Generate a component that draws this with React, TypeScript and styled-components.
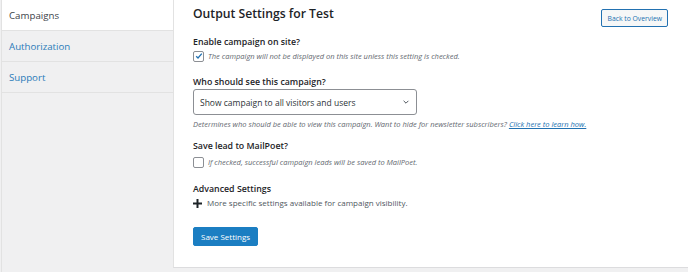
import React from "react";
import styled, { createGlobalStyle } from "styled-components";

const GlobalStyle = createGlobalStyle`
  body {
    margin: 0;
    font-family: "Open Sans", "Noto Sans", sans-serif;
    background: #f0f0f1;
  }
`;

const StyledPage = styled.div`
  display: flex;
  width: 688px;
  height: 272px;
  background: #f0f0f1;
  overflow: hidden;
`;

const StyledSidebar = styled.nav`
  width: 171px;
  margin-left: 1px;
  border-left: 1px solid #e2e2e2;
  display: flex;
  flex-direction: column;
`;

const StyledTab = styled.div<{ $active?: boolean }>`
  height: 30px;
  display: flex;
  align-items: center;
  padding-left: 7px;
  font-size: 9.7px;
  color: ${(p) => (p.$active ? "#3c434a" : "#2b7bb9")};
  background: ${(p) => (p.$active ? "#ffffff" : "#f0f0f1")};
  border-bottom: 1px solid #e2e2e2;
`;

const StyledMain = styled.main`
  flex: 1;
  height: 268px;
  background: #ffffff;
  border-left: 1px solid #e2e2e2;
  border-bottom: 1px solid #dcdcde;
  padding: 0 20px 0 19px;
  box-sizing: border-box;
`;

const StyledHeader = styled.div`
  display: flex;
  justify-content: space-between;
  align-items: flex-start;
  padding-top: 5px;
`;

const StyledTitle = styled.h1`
  margin: 0;
  font-size: 12.2px;
  line-height: 18px;
  font-weight: 600;
  color: #1d2327;
`;

const StyledSmallButton = styled.button`
  margin-top: 4px;
  height: 18px;
  padding: 0 5px;
  font-family: inherit;
  font-size: 6.8px;
  color: #2271b1;
  background: #f6f7f7;
  border: 1px solid #2271b1;
  border-radius: 2px;
`;

const StyledSection = styled.section<{ $top: number }>`
  margin-top: ${(p) => p.$top}px;
`;

const StyledLabel = styled.h2`
  margin: 0;
  font-size: 8.8px;
  line-height: 12px;
  font-weight: 600;
  color: #1d2327;
`;

const StyledRow = styled.label<{ $top: number }>`
  display: flex;
  align-items: center;
  gap: 4px;
  margin-top: ${(p) => p.$top}px;
  height: 14px;
`;

const StyledCheck = styled.span`
  width: 11px;
  height: 11px;
  box-sizing: border-box;
  border: 1px solid #8c8f94;
  border-radius: 2px;
  background: #fff;
  display: flex;
  align-items: center;
  justify-content: center;
`;

const StyledNote = styled.p`
  margin: 0;
  font-size: 7.5px;
  line-height: 10px;
  font-style: italic;
  color: #646970;
`;

const StyledLink = styled.a`
  color: #2271b1;
  text-decoration: underline;
`;

const StyledSelect = styled.div`
  margin: 1px 0 4px;
  width: 224px;
  height: 26px;
  box-sizing: border-box;
  border: 1px solid #8c8f94;
  border-radius: 3px;
  display: flex;
  align-items: center;
  justify-content: space-between;
  padding: 0 6px 0 6px;
  font-size: 8.5px;
  color: #2c3338;
`;

const StyledPlusRow = styled.div`
  display: flex;
  align-items: center;
  gap: 5px;
  margin-top: 1px;
  font-size: 8px;
  line-height: 14px;
  color: #50575e;
`;

const StyledPrimary = styled.button`
  display: block;
  margin-top: 17px;
  height: 19px;
  padding: 0 7px;
  font-family: inherit;
  font-size: 8px;
  color: #ffffff;
  background: #1b7ec2;
  border: 1px solid #1b7ec2;
  border-radius: 2px;
`;

const Tick = () => (
  <svg width="8" height="8" viewBox="0 0 20 20">
    <path d="M3 10.5l4.5 4.5L17 4" fill="none" stroke="#2271b1" strokeWidth="3.2" />
  </svg>
);

const Chevron = () => (
  <svg width="8" height="8" viewBox="0 0 20 20">
    <path d="M4 7l6 6 6-6" fill="none" stroke="#50575e" strokeWidth="2.5" />
  </svg>
);

const Plus = () => (
  <svg width="9" height="9" viewBox="0 0 10 10">
    <path d="M5 0v10M0 5h10" stroke="#1d2327" strokeWidth="2.2" />
  </svg>
);

const App = () => {
  return (
    <>
      <GlobalStyle />
      <StyledPage>
        <StyledSidebar>
          <StyledTab $active>Campaigns</StyledTab>
          <StyledTab>Authorization</StyledTab>
          <StyledTab>Support</StyledTab>
        </StyledSidebar>
        <StyledMain>
          <StyledHeader>
            <StyledTitle>Output Settings for Test</StyledTitle>
            <StyledSmallButton>Back to Overview</StyledSmallButton>
          </StyledHeader>

          <StyledSection $top={9}>
            <StyledLabel>Enable campaign on site?</StyledLabel>
            <StyledRow $top={1}>
              <StyledCheck>
                <Tick />
              </StyledCheck>
              <StyledNote>
                The campaign will not be displayed on this site unless this setting is checked.
              </StyledNote>
            </StyledRow>
          </StyledSection>

          <StyledSection $top={13}>
            <StyledLabel>Who should see this campaign?</StyledLabel>
            <StyledSelect>
              <span>Show campaign to all visitors and users</span>
              <Chevron />
            </StyledSelect>
            <StyledNote>
              Determines who should be able to view this campaign. Want to hide for newsletter
              subscribers? <StyledLink>Click here to learn how.</StyledLink>
            </StyledNote>
          </StyledSection>

          <StyledSection $top={11}>
            <StyledLabel>Save lead to MailPoet?</StyledLabel>
            <StyledRow $top={3}>
              <StyledCheck />
              <StyledNote>If checked, successful campaign leads will be saved to MailPoet.</StyledNote>
            </StyledRow>
          </StyledSection>

          <StyledSection $top={14}>
            <StyledLabel>Advanced Settings</StyledLabel>
            <StyledPlusRow>
              <Plus />
              More specific settings available for campaign visibility.
            </StyledPlusRow>
          </StyledSection>

          <StyledPrimary>Save Settings</StyledPrimary>
        </StyledMain>
      </StyledPage>
    </>
  );
};

export default App;
